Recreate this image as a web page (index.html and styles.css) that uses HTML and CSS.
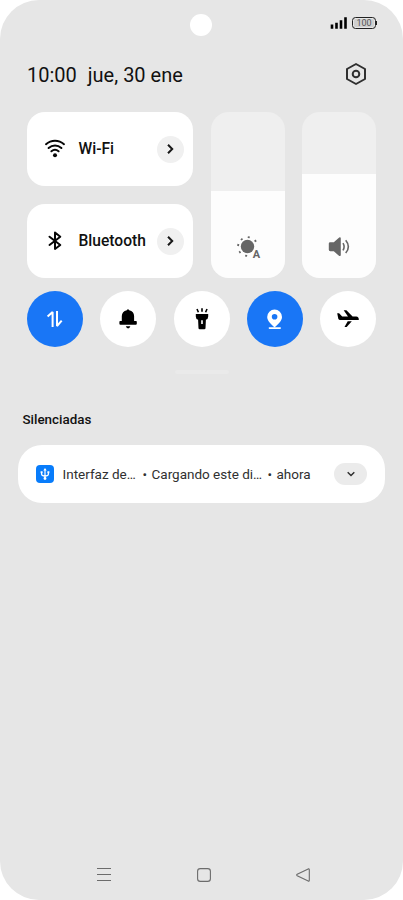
FILE: index.html
```html
<!DOCTYPE html>
<html lang="es">
  <head>
    <meta charset="UTF-8" />
    <meta name="viewport" content="width=device-width, initial-scale=1.0" />
    <title>Centro de control</title>
    <link rel="stylesheet" href="styles.css">
  </head>
  <body>
    <div class="phone">
      <span class="camera"></span>

      <div class="status-bar">
        <svg class="signal" width="17" height="12" viewBox="0 0 17 12">
          <path d="M2 11.7V7.5M6.5 11.7V5.8M11 11.7V3.2M15.5 11.7V.3" />
        </svg>
        <span class="battery">100</span>
      </div>

      <header class="header">
        <span class="time">10:00</span>
        <span class="date">jue, 30 ene</span>
        <svg class="settings" width="24" height="24" viewBox="0 0 24 24">
          <path d="M12 2L21 7V17L12 22L3 17V7Z" />
          <circle cx="12" cy="12" r="3.3" />
        </svg>
      </header>

      <main class="controls">
        <div class="connections">
          <div class="card">
            <svg class="card-icon" width="22" height="22" viewBox="0 0 22 22">
              <path d="M2 6.2C7.2 1.5 14.8 1.5 20 6.2M4.6 10C8.4 6.6 13.6 6.6 17.4 10M7.4 13.3C9.6 11.5 12.4 11.5 14.6 13.3" />
              <circle class="dot" cx="11" cy="17.3" r="2" />
            </svg>
            <span class="card-name">Wi-Fi</span>
            <span class="card-arrow">
              <svg width="12" height="12" viewBox="0 0 12 12"><path d="M4 1.8L8.2 6L4 10.2" /></svg>
            </span>
          </div>
          <div class="card">
            <svg class="card-icon" width="22" height="22" viewBox="0 0 22 22">
              <path d="M5.5 6.7L16.3 15L11 19V2.5L16.3 6.7L5.5 15" />
            </svg>
            <span class="card-name">Bluetooth</span>
            <span class="card-arrow">
              <svg width="12" height="12" viewBox="0 0 12 12"><path d="M4 1.8L8.2 6L4 10.2" /></svg>
            </span>
          </div>
        </div>

        <div class="slider brightness">
          <div class="level">
            <svg width="26" height="26" viewBox="0 0 26 26">
              <circle cx="12.5" cy="12.5" r="6.7" />
              <g class="rays">
                <path d="M13.6 4.1L13.9 2.3M19.6 7.5L21.2 6.4M7.2 6L6.2 4.6M4.1 11.2L2.3 10.8M5.5 17.6L4.2 18.6M11.3 20.9L11 22.7" />
              </g>
              <text x="17.8" y="23.6">A</text>
            </svg>
          </div>
        </div>
        <div class="slider volume">
          <div class="level">
            <svg width="26" height="26" viewBox="0 0 26 26">
              <path d="M4.2 8.2H7.8L13.2 3.5Q14.8 2.9 14.8 4.5V21Q14.8 22.5 13.2 21.9L7.8 17.2H4.2Q2.8 17.2 2.8 15.8V9.6Q2.8 8.2 4.2 8.2Z" />
              <path class="waves" d="M17 9.1Q19.2 12.7 17 16.3M19.7 6.3Q25 12.7 19.7 19.1" />
            </svg>
          </div>
        </div>
      </main>

      <div class="toggles">
        <span class="toggle active">
          <svg width="24" height="24" viewBox="0 0 24 24">
            <path class="line" d="M4.6 9.6L9.6 5V20M14 4V19L18.7 13.6" />
          </svg>
        </span>
        <span class="toggle">
          <svg width="24" height="24" viewBox="0 0 24 24">
            <path d="M10.8 3.2Q12 1.2 13.2 3.2Q18 4.3 18.1 9V13.9H20Q20.8 13.9 20.8 14.8V16.7Q20.8 17.8 19.8 17.8H4.4Q3.4 17.8 3.4 16.7V14.8Q3.4 13.9 4.2 13.9H5.8V9Q6 4.3 10.8 3.2Z" />
            <path d="M9.8 19.3H14.4Q13.8 21.4 12.1 21.4T9.8 19.3Z" />
          </svg>
        </span>
        <span class="toggle">
          <svg width="24" height="24" viewBox="0 0 24 24">
            <path class="beam" d="M12 1.2V4.8M7 2L8.4 5.2M17 2L15.6 5.2" />
            <path fill-rule="evenodd" d="M5.8 7H18.2V9.5Q18.2 12 15.9 12.7L15.5 21.2Q15.4 22.3 14.3 22.3H9.7Q8.6 22.3 8.5 21.2L8.1 12.7Q5.8 12 5.8 9.5ZM11.2 13.2V17H12.8V13.2Z" />
          </svg>
        </span>
        <span class="toggle active">
          <svg width="24" height="24" viewBox="0 0 24 24">
            <path fill-rule="evenodd" d="M11.6 20.4C8.2 17 4.2 13.8 4.2 9.9A7.4 7.4 0 0 1 19 9.9C19 13.8 15 17 11.6 20.4ZM11.6 7A2.8 2.8 0 1 0 11.6 12.6A2.8 2.8 0 1 0 11.6 7Z" />
            <rect x="5.6" y="20.2" width="12.4" height="1.7" rx=".8" />
          </svg>
        </span>
        <span class="toggle">
          <svg width="24" height="24" viewBox="0 0 24 24">
            <path d="M1.2 6.3H3.1L6.2 9.6H12L7.7 3.3H10.4L16.6 9.6H20.2Q23 9.7 22.8 12.9H3.8Q2.6 12.9 2.3 11.8Z" />
            <path d="M11.7 14.3H15.8L10.7 20H8.5Z" />
          </svg>
        </span>
      </div>

      <span class="handle"></span>

      <section class="notifications">
        <h2>Silenciadas</h2>
        <div class="notification">
          <span class="app-icon">
            <svg width="14" height="14" viewBox="0 0 14 14">
              <path d="M7 2.4V11M3.6 5.3V7.2Q3.7 8.7 7 9.2Q10.3 8.7 10.4 7.2V5.3" />
              <path class="solid" d="M7 .9L8.7 3.6H5.3ZM2.6 4.2H4.6V6.2H2.6ZM9.4 4.2H11.4V6.2H9.4Z" />
              <circle class="solid" cx="7" cy="11.5" r="1.4" />
            </svg>
          </span>
          <span class="app-name">Interfaz de…</span>
          <span class="bullet">•</span>
          <span class="message">Cargando este di…</span>
          <span class="bullet">•</span>
          <span class="when">ahora</span>
          <span class="expand">
            <svg width="10" height="10" viewBox="0 0 10 10"><path d="M1.7 3.2L5 6.5L8.3 3.2" /></svg>
          </span>
        </div>
      </section>

      <nav class="nav-bar">
        <svg width="16" height="16" viewBox="0 0 16 16"><path d="M1 1.5H15M1 7.5H15M1 13.5H15" /></svg>
        <svg width="16" height="16" viewBox="0 0 16 16"><rect x="1.6" y="1.6" width="12.8" height="12.8" rx="2.7" /></svg>
        <svg width="16" height="16" viewBox="0 0 16 16"><path d="M13.2 1.9L2.2 7.3Q1.1 8 2.2 8.7L13.2 14.1Q14.3 14.4 14.3 13.2V2.8Q14.3 1.6 13.2 1.9Z" /></svg>
      </nav>
    </div>
  </body>
</html>
```

FILE: styles.css
```css
* {
  box-sizing: border-box;
}

body {
  margin: 0;
  background: #fff;
  font-family: Roboto, sans-serif;
  color: #111;
}

svg {
  display: block;
  flex: none;
}

.phone {
  position: relative;
  display: flex;
  flex-direction: column;
  width: 403px;
  height: 900px;
  background: #e6e6e6;
  border-radius: 39px;
  overflow: hidden;
}

.camera {
  position: absolute;
  top: 14px;
  left: 190px;
  width: 22px;
  height: 22px;
  border-radius: 50%;
  background: #fff;
}

.status-bar {
  display: flex;
  justify-content: flex-end;
  gap: 5px;
  height: 29px;
  padding: 17px 27px 0 0;
}

.signal {
  fill: none;
  stroke: #000;
  stroke-width: 2.6;
  stroke-linecap: butt;
}

.battery {
  position: relative;
  width: 24px;
  height: 12px;
  border: 1px solid #222;
  border-radius: 3.5px;
  background: #cfcfcf;
  box-shadow: inset 0 0 0 1px #e6e6e6;
  color: #555;
  font-size: 9px;
  line-height: 11px;
  text-align: center;
}

.battery::after {
  content: "";
  position: absolute;
  top: 3px;
  right: -2px;
  width: 1px;
  height: 4px;
  background: #222;
}

.header {
  display: flex;
  align-items: center;
  height: 46px;
  margin: 23px 35px 0 27px;
  font-size: 20px;
}

.date {
  margin-left: 11px;
}

.settings {
  margin: -3px 0 0 auto;
  fill: none;
  stroke: #303030;
  stroke-width: 2;
  stroke-linejoin: round;
}

.controls {
  display: grid;
  grid-template-columns: 166px 74px 74px;
  gap: 17.5px;
  height: 166px;
  margin: 14px 27px 0 27px;
}

.connections {
  display: flex;
  flex-direction: column;
  gap: 18px;
}

.card {
  display: flex;
  align-items: center;
  height: 74px;
  padding: 0 9.5px 0 17px;
  border-radius: 18px;
  background: #fff;
}

.card-icon {
  fill: none;
  stroke: #080808;
  stroke-width: 2;
  stroke-linecap: round;
  stroke-linejoin: round;
}

.card-icon .dot {
  fill: #080808;
  stroke: none;
}

.card-name {
  margin-left: 12.5px;
  font-size: 15.6px;
  font-weight: 500;
}

.card-arrow {
  display: flex;
  align-items: center;
  justify-content: center;
  width: 27px;
  height: 27px;
  margin-left: auto;
  border-radius: 50%;
  background: #f0f0f0;
}

.card-arrow svg {
  fill: none;
  stroke: #181818;
  stroke-width: 2;
}

.slider {
  display: flex;
  align-items: flex-end;
  border-radius: 18px;
  background: #efefef;
  overflow: hidden;
}

.level {
  display: flex;
  align-items: flex-end;
  justify-content: center;
  width: 100%;
  padding-bottom: 18px;
  background: #fdfdfd;
  fill: #666;
}

.brightness .level {
  height: 87px;
}

.volume .level {
  height: 104px;
}

.rays {
  stroke: #666;
  stroke-width: 2;
}

.level text {
  font-size: 11px;
  font-weight: 700;
}

.waves {
  fill: none;
  stroke: #666;
  stroke-width: 1.6;
}

.toggles {
  display: flex;
  justify-content: space-between;
  margin: 13px 27px 0;
}

.toggle {
  display: flex;
  align-items: center;
  justify-content: center;
  width: 56px;
  height: 56px;
  border-radius: 50%;
  background: #fff;
  fill: #000;
}

.toggle.active {
  background: #1976f6;
  fill: #fff;
}

.line {
  fill: none;
  stroke: #fff;
  stroke-width: 2;
  stroke-linejoin: bevel;
}

.beam {
  fill: none;
  stroke: #000;
  stroke-width: 1.6;
}

.handle {
  width: 54px;
  height: 4px;
  margin: 23px 0 0 175px;
  border-radius: 2px;
  background: #eaeaea;
}

.notifications {
  margin: 37px 18px 0;
}

.notifications h2 {
  margin: 0 0 17px 4.5px;
  padding-top: 1px;
  font-size: 13.4px;
  font-weight: 500;
  line-height: 16px;
}

.notification {
  display: flex;
  align-items: center;
  height: 58px;
  padding: 0 18px;
  border-radius: 24px;
  background: #fff;
  color: #303030;
  font-size: 13.5px;
  white-space: nowrap;
}

.app-icon {
  display: flex;
  align-items: center;
  justify-content: center;
  width: 18px;
  height: 18px;
  margin-right: 8.5px;
  border-radius: 4px;
  background: #087cfb;
}

.app-icon svg {
  fill: none;
  stroke: #fff;
  stroke-width: 1.2;
}

.app-icon .solid {
  fill: #fff;
  stroke: none;
}

.app-name {
  width: 80px;
}

.bullet {
  width: 9px;
  font-size: 13.5px;
}

.message {
  width: 116px;
}

.expand {
  display: flex;
  align-items: center;
  justify-content: center;
  width: 33px;
  height: 22px;
  margin-left: auto;
  border-radius: 11px;
  background: #ebebeb;
}

.expand svg {
  fill: none;
  stroke: #303030;
  stroke-width: 1.5;
}

.nav-bar {
  display: flex;
  justify-content: space-between;
  margin: auto 92px 17px 96px;
}

.nav-bar svg {
  fill: none;
  stroke: #6c6c6c;
  stroke-width: 1.1;
}
```
